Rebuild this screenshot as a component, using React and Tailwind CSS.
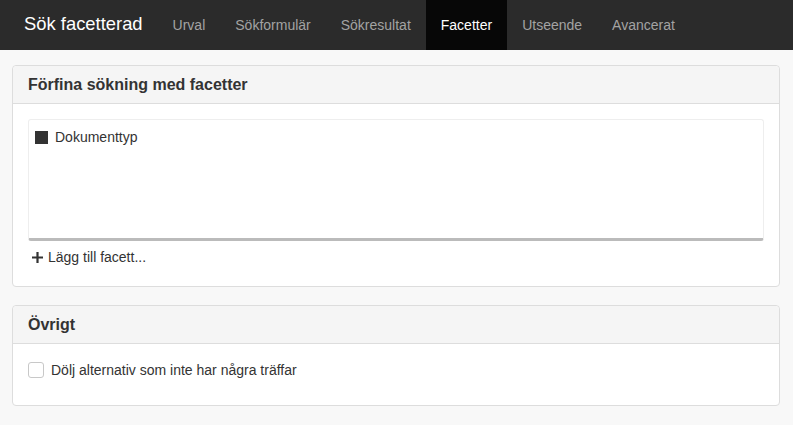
const navItems = ["Urval", "Sökformulär", "Sökresultat", "Facetter", "Utseende", "Avancerat"];

const Panel = ({ title, children }) => (
  <div className="bg-white border border-[#dddddd] rounded-[4px] mb-[18px]">
    <div className="bg-[#f5f5f5] border-b border-[#dddddd] rounded-t-[4px] h-[38px] px-[15px] flex items-center">
      <h3 className="text-[16px] font-bold text-[#333333] leading-none">{title}</h3>
    </div>
    {children}
  </div>
);

export default function App() {
  return (
    <div
      className="min-h-[425px] bg-[#f8f8f8] text-[#333333]"
      style={{ fontFamily: '"Liberation Sans", Arial, sans-serif' }}
    >
      <nav className="h-[50px] bg-[#2b2b2b] flex items-stretch pl-[9px]">
        <div className="px-[15px] flex items-center text-[18.4px] text-white pb-[2px]">Sök facetterad</div>
        <ul className="flex items-stretch">
          {navItems.map((item) => (
            <li
              key={item}
              className={
                item === "Facetter"
                  ? "px-[15px] flex items-center text-[14px] text-white bg-[#070707]"
                  : "px-[15px] flex items-center text-[14px] text-[#a3a3a3]"
              }
            >
              {item}
            </li>
          ))}
        </ul>
      </nav>

      <div className="pt-[15px] pl-[12px] pr-[13px]">
        <Panel title="Förfina sökning med facetter">
          <div className="px-[15px] pt-[15px] pb-[19px]">
            <div className="h-[122px] bg-white border border-[#eeeeee] border-b-[3px] border-b-[#bbbbbb] rounded-[3px] pl-[6px] pt-[7px]">
              <div className="flex items-center gap-[7px] text-[14px] leading-[20px]">
                <span className="w-[13px] h-[13px] bg-[#333333] inline-block"></span>
                <span>Dokumenttyp</span>
              </div>
            </div>
            <div className="flex items-center gap-[4px] pl-[3px] pt-[6px] text-[14px] leading-[20px] text-[#333333]">
              <svg width="13" height="13" viewBox="0 0 13 13">
                <path d="M6.5 1v11M1 6.5h11" stroke="#333" strokeWidth="2.2" />
              </svg>
              <span>Lägg till facett...</span>
            </div>
          </div>
        </Panel>

        <Panel title="Övrigt">
          <div className="px-[15px] pt-[16px] pb-[25px]">
            <label className="flex items-center gap-[7px] text-[14px] leading-[20px]">
              <span className="w-[16px] h-[16px] bg-white border border-[#c8c8c8] rounded-[3px] inline-block"></span>
              <span>Dölj alternativ som inte har några träffar</span>
            </label>
          </div>
        </Panel>
      </div>
    </div>
  );
}
